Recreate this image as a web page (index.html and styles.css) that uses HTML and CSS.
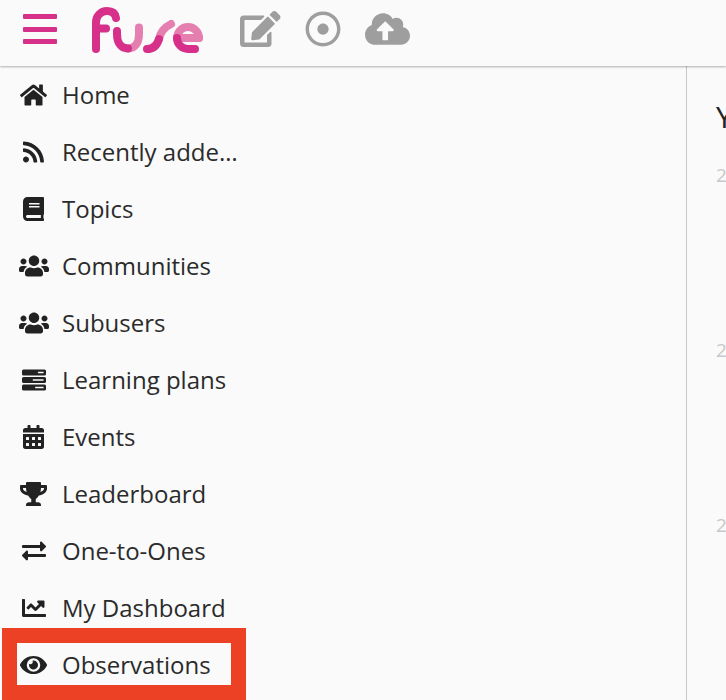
FILE: index.html
```html
<!DOCTYPE html>
<html lang="en">
<head>
    <meta charset="UTF-8">
    <meta name="viewport" content="width=device-width, initial-scale=1.0">
    <title>Fuse</title>
    <link rel="stylesheet" href="styles.css">
</head>
<body>
    <header class="topbar">
        <button class="menu-btn" aria-label="Menu"><span></span><span></span><span></span></button>

        <!-- Logo -->
        <svg class="logo" viewBox="0 0 116 52" role="img" aria-label="Fuse" fill="none" stroke-linecap="round">
            <g stroke="#e57fb0" stroke-width="8">
                <path d="M38 45.5C44 45.5 49 41 49 31V24.5"/>
                <path d="M69 36Q71 26 81 21"/>
                <path d="M87 35H109"/>
                <path d="M109 35A11 11 0 0 0 87 35"/>
            </g>
            <g stroke="#d6308a" stroke-width="8">
                <path d="M6 46V19A11 11 0 0 1 17 8Q25 8 26 15"/>
                <path d="M6 25.5H16"/>
                <path d="M27 28V31C27 41 32 45.5 38 45.5"/>
                <path d="M57 46Q66 46 69 36"/>
                <path d="M87 35A11 11 0 0 0 98 46H105"/>
            </g>
        </svg>

        <div class="tools">
            <svg class="tool" viewBox="0 0 576 512"><path d="M402.6 83.2l90.2 90.2c3.8 3.8 3.8 10 0 13.8L274.4 405.6l-92.8 10.3c-12.4 1.4-22.9-9.1-21.5-21.5l10.3-92.8L388.8 83.2c3.8-3.8 10-3.8 13.8 0zm162-22.9l-48.8-48.8c-15.2-15.2-39.9-15.2-55.2 0l-35.4 35.4c-3.8 3.8-3.8 10 0 13.8l90.2 90.2c3.8 3.8 10 3.8 13.8 0l35.4-35.4c15.2-15.3 15.2-40 0-55.2zM384 346.2V448H64V128h229.8c3.2 0 6.2-1.3 8.5-3.5l40-40c7.6-7.6 2.2-20.5-8.5-20.5H48C21.5 64 0 85.5 0 112v352c0 26.5 21.5 48 48 48h352c26.5 0 48-21.5 48-48V306.2c0-10.7-12.9-16-20.5-8.5l-40 40c-2.2 2.3-3.5 5.3-3.5 8.5z"/></svg>
            <svg class="tool" viewBox="0 0 512 512"><path d="M256 56c110.532 0 200 89.451 200 200 0 110.532-89.451 200-200 200-110.532 0-200-89.451-200-200 0-110.532 89.451-200 200-200m0-48C119.033 8 8 119.033 8 256s111.033 248 248 248 248-111.033 248-248S392.967 8 256 8zm0 168c-44.183 0-80 35.817-80 80s35.817 80 80 80 80-35.817 80-80-35.817-80-80-80z"/></svg>
            <svg class="tool" viewBox="0 0 640 512"><path d="M537.6 226.6c4.1-10.7 6.4-22.4 6.4-34.6 0-53-43-96-96-96-19.7 0-38.1 6-53.3 16.2C367 64.2 315.3 32 256 32c-88.4 0-160 71.6-160 160 0 2.7.1 5.4.2 8.1C40.2 219.8 0 273.2 0 336c0 79.5 64.5 144 144 144h368c70.7 0 128-57.3 128-128 0-61.9-44-113.6-102.4-125.4zM393.4 288H328v112c0 8.8-7.2 16-16 16h-48c-8.8 0-16-7.2-16-16V288h-65.4c-14.3 0-21.4-17.2-11.3-27.3l105.4-105.4c6.2-6.2 16.4-6.2 22.6 0l105.4 105.4c10.1 10.1 2.9 27.3-11.3 27.3z"/></svg>
        </div>
    </header>

    <div class="layout">
        <nav class="sidebar">
            <a class="nav-item"><span class="nav-icon"><svg viewBox="0 0 576 512"><path d="M280.37 148.26L96 300.11V464a16 16 0 0 0 16 16l112.06-.29a16 16 0 0 0 15.92-16V368a16 16 0 0 1 16-16h64a16 16 0 0 1 16 16v95.64a16 16 0 0 0 16 16.05L464 480a16 16 0 0 0 16-16V300L295.67 148.26a12.19 12.19 0 0 0-15.3 0zM571.6 251.47L488 182.56V44.05a12 12 0 0 0-12-12h-56a12 12 0 0 0-12 12v72.61L318.47 43a48 48 0 0 0-61 0L4.34 251.47a12 12 0 0 0-1.6 16.9l25.5 31A12 12 0 0 0 45.15 301l235.22-193.74a12.19 12.19 0 0 1 15.3 0L530.9 301a12 12 0 0 0 16.9-1.6l25.5-31a12 12 0 0 0-1.7-16.93z"/></svg></span><span class="nav-label">Home</span></a>
            <a class="nav-item"><span class="nav-icon"><svg viewBox="0 0 448 512"><path d="M128.081 415.959c0 35.369-28.672 64.041-64.041 64.041S0 451.328 0 415.959s28.672-64.041 64.041-64.041 64.04 28.673 64.04 64.041zm175.66 47.25c-8.354-154.6-132.185-278.587-286.95-286.95C7.656 175.765 0 183.105 0 192.253v48.069c0 8.415 6.49 15.472 14.887 16.018 111.832 7.284 201.473 96.702 208.772 208.772.547 8.397 7.604 14.887 16.018 14.887h48.069c9.149.001 16.489-7.655 15.995-16.79zm144.249.288C439.596 229.677 251.465 40.445 16.503 32.01 7.473 31.686 0 38.981 0 48.016v48.068c0 8.625 6.835 15.645 15.453 15.999 191.179 7.839 344.627 161.316 352.465 352.465.353 8.618 7.373 15.453 15.999 15.453h48.068c9.034-.001 16.329-7.474 16.005-16.504z"/></svg></span><span class="nav-label">Recently added content</span></a>
            <a class="nav-item"><span class="nav-icon"><svg viewBox="0 0 448 512"><path d="M448 360V24c0-13.3-10.7-24-24-24H96C43 0 0 43 0 96v320c0 53 43 96 96 96h328c13.3 0 24-10.7 24-24v-16c0-7.5-3.5-14.3-8.9-18.7-4.2-15.4-4.2-59.3 0-74.7 5.4-4.3 8.9-11.1 8.9-18.6zM128 134c0-3.3 2.7-6 6-6h212c3.3 0 6 2.7 6 6v20c0 3.3-2.7 6-6 6H134c-3.3 0-6-2.7-6-6v-20zm0 64c0-3.3 2.7-6 6-6h212c3.3 0 6 2.7 6 6v20c0 3.3-2.7 6-6 6H134c-3.3 0-6-2.7-6-6v-20zm253.4 250H96c-17.7 0-32-14.3-32-32 0-17.6 14.4-32 32-32h285.4c-1.9 17.1-1.9 46.9 0 64z"/></svg></span><span class="nav-label">Topics</span></a>
            <a class="nav-item"><span class="nav-icon"><svg viewBox="0 0 640 512"><path d="M96 224c35.3 0 64-28.7 64-64s-28.7-64-64-64-64 28.7-64 64 28.7 64 64 64zm448 0c35.3 0 64-28.7 64-64s-28.7-64-64-64-64 28.7-64 64 28.7 64 64 64zm32 32h-64c-17.6 0-33.5 7.1-45.1 18.6 40.3 22.1 68.9 62 75.1 109.4h66c17.7 0 32-14.3 32-32v-32c0-35.3-28.7-64-64-64zm-256 0c61.9 0 112-50.1 112-112S381.9 32 320 32 208 82.1 208 144s50.1 112 112 112zm76.8 32h-8.3c-20.8 10-43.9 16-68.5 16s-47.6-6-68.5-16h-8.3C179.6 288 128 339.6 128 403.2V432c0 26.5 21.5 48 48 48h288c26.5 0 48-21.5 48-48v-28.8c0-63.6-51.6-115.2-115.2-115.2zm-223.7-13.4C161.5 263.1 145.6 256 128 256H64c-35.3 0-64 28.7-64 64v32c0 17.7 14.3 32 32 32h65.9c6.3-47.4 34.9-87.3 75.2-109.4z"/></svg></span><span class="nav-label">Communities</span></a>
            <a class="nav-item"><span class="nav-icon"><svg viewBox="0 0 640 512"><path d="M96 224c35.3 0 64-28.7 64-64s-28.7-64-64-64-64 28.7-64 64 28.7 64 64 64zm448 0c35.3 0 64-28.7 64-64s-28.7-64-64-64-64 28.7-64 64 28.7 64 64 64zm32 32h-64c-17.6 0-33.5 7.1-45.1 18.6 40.3 22.1 68.9 62 75.1 109.4h66c17.7 0 32-14.3 32-32v-32c0-35.3-28.7-64-64-64zm-256 0c61.9 0 112-50.1 112-112S381.9 32 320 32 208 82.1 208 144s50.1 112 112 112zm76.8 32h-8.3c-20.8 10-43.9 16-68.5 16s-47.6-6-68.5-16h-8.3C179.6 288 128 339.6 128 403.2V432c0 26.5 21.5 48 48 48h288c26.5 0 48-21.5 48-48v-28.8c0-63.6-51.6-115.2-115.2-115.2zm-223.7-13.4C161.5 263.1 145.6 256 128 256H64c-35.3 0-64 28.7-64 64v32c0 17.7 14.3 32 32 32h65.9c6.3-47.4 34.9-87.3 75.2-109.4z"/></svg></span><span class="nav-label">Subusers</span></a>
            <a class="nav-item"><span class="nav-icon"><svg viewBox="0 0 512 512"><path fill-rule="evenodd" d="M32 32H480A32 32 0 0 1 512 64V128A32 32 0 0 1 480 160H32A32 32 0 0 1 0 128V64A32 32 0 0 1 32 32ZM340 82V110H460V82ZM32 192H480A32 32 0 0 1 512 224V288A32 32 0 0 1 480 320H32A32 32 0 0 1 0 288V224A32 32 0 0 1 32 192ZM230 242V270H460V242ZM32 352H480A32 32 0 0 1 512 384V448A32 32 0 0 1 480 480H32A32 32 0 0 1 0 448V384A32 32 0 0 1 32 352ZM280 402V430H460V402Z"/></svg></span><span class="nav-label">Learning plans</span></a>
            <a class="nav-item"><span class="nav-icon"><svg viewBox="0 0 448 512"><path d="M0 464c0 26.5 21.5 48 48 48h352c26.5 0 48-21.5 48-48V192H0v272zm320-196c0-6.6 5.4-12 12-12h40c6.6 0 12 5.4 12 12v40c0 6.6-5.4 12-12 12h-40c-6.6 0-12-5.4-12-12v-40zm0 128c0-6.6 5.4-12 12-12h40c6.6 0 12 5.4 12 12v40c0 6.6-5.4 12-12 12h-40c-6.6 0-12-5.4-12-12v-40zM192 268c0-6.6 5.4-12 12-12h40c6.6 0 12 5.4 12 12v40c0 6.6-5.4 12-12 12h-40c-6.6 0-12-5.4-12-12v-40zm0 128c0-6.6 5.4-12 12-12h40c6.6 0 12 5.4 12 12v40c0 6.6-5.4 12-12 12h-40c-6.6 0-12-5.4-12-12v-40zM64 268c0-6.6 5.4-12 12-12h40c6.6 0 12 5.4 12 12v40c0 6.6-5.4 12-12 12H76c-6.6 0-12-5.4-12-12v-40zm0 128c0-6.6 5.4-12 12-12h40c6.6 0 12 5.4 12 12v40c0 6.6-5.4 12-12 12H76c-6.6 0-12-5.4-12-12v-40zM400 64h-48V16c0-8.8-7.2-16-16-16h-32c-8.8 0-16 7.2-16 16v48H160V16c0-8.8-7.2-16-16-16h-32c-8.8 0-16 7.2-16 16v48H48C21.5 64 0 85.5 0 112v48h448v-48c0-26.5-21.5-48-48-48z"/></svg></span><span class="nav-label">Events</span></a>
            <a class="nav-item"><span class="nav-icon"><svg viewBox="0 0 576 512"><path d="M552 64H448V24c0-13.3-10.7-24-24-24H152c-13.3 0-24 10.7-24 24v40H24C10.7 64 0 74.7 0 88v56c0 35.7 22.5 72.4 61.9 100.7 31.5 22.7 69.8 37.1 110 41.7C203.3 338.5 240 360 240 360v72h-48c-35.3 0-64 20.7-64 56v12c0 6.6 5.4 12 12 12h296c6.6 0 12-5.4 12-12v-12c0-35.3-28.7-56-64-56h-48v-72s36.7-21.5 68.1-73.6c40.3-4.6 78.6-19 110-41.7 39.3-28.3 61.9-65 61.9-100.7V88c0-13.3-10.7-24-24-24zM99.3 192.8C74.9 175.2 64 155.6 64 144v-16h64.2c1 32.6 5.8 61.2 12.8 86.2-15.1-5.2-29.2-12.4-41.7-21.4zM512 144c0 16.1-17.7 36.1-35.3 48.8-12.5 9-26.7 16.2-41.8 21.4 7-25 11.8-53.6 12.8-86.2H512v16z"/></svg></span><span class="nav-label">Leaderboard</span></a>
            <a class="nav-item"><span class="nav-icon"><svg viewBox="0 0 512 512"><path d="M0 168v-16c0-13.255 10.745-24 24-24h360V80c0-21.367 25.899-32.042 40.971-16.971l80 80c9.372 9.373 9.372 24.569 0 33.941l-80 80C409.956 271.982 384 261.456 384 240v-48H24c-13.255 0-24-10.745-24-24zm488 152H128v-48c0-21.314-25.862-32.08-40.971-16.971l-80 80c-9.372 9.373-9.372 24.569 0 33.941l80 80C102.057 463.997 128 453.437 128 432v-48h360c13.255 0 24-10.745 24-24v-16c0-13.255-10.745-24-24-24z"/></svg></span><span class="nav-label">One-to-Ones</span></a>
            <a class="nav-item"><span class="nav-icon"><svg viewBox="0 0 512 512"><path d="M496 384H64V80c0-8.84-7.16-16-16-16H16C7.16 64 0 71.16 0 80v336c0 17.67 14.33 32 32 32h464c8.84 0 16-7.16 16-16v-32c0-8.84-7.16-16-16-16zM464 96H345.94c-21.38 0-32.09 25.85-16.97 40.97l32.4 32.4L288 242.75l-73.37-73.37c-12.5-12.5-32.76-12.5-45.25 0l-68.69 68.69c-6.25 6.25-6.25 16.38 0 22.63l22.62 22.62c6.25 6.25 16.38 6.25 22.63 0L192 237.25l73.37 73.37c12.5 12.5 32.76 12.5 45.25 0l96-96 32.4 32.4c15.12 15.12 40.97 4.41 40.97-16.97V112c.01-8.84-7.15-16-15.99-16z"/></svg></span><span class="nav-label">My Dashboard</span></a>
            <a class="nav-item"><span class="nav-icon"><svg viewBox="0 0 576 512"><path d="M572.52 241.4C518.29 135.59 410.93 64 288 64S57.68 135.64 3.48 241.41a32.35 32.35 0 0 0 0 29.19C57.71 376.41 165.07 448 288 448s230.32-71.64 284.52-177.41a32.35 32.35 0 0 0 0-29.19zM288 400a144 144 0 1 1 144-144 143.93 143.93 0 0 1-144 144zm0-240a95.31 95.31 0 0 0-25.31 3.79 47.85 47.85 0 0 1-66.9 66.9A95.78 95.78 0 1 0 288 160z"/></svg></span><span class="nav-label">Observations</span></a>
        </nav>

        <main class="content">
            <h2 class="content-title">Y</h2>
            <div class="feed-item">2</div>
            <div class="feed-item">2</div>
            <div class="feed-item">2</div>
        </main>
    </div>

    <!-- Red annotation frame around the Observations row -->
    <div class="callout"></div>
</body>
</html>
```

FILE: styles.css
```css
* {
    margin: 0;
    padding: 0;
    box-sizing: border-box;
}

body {
    position: relative;
    height: 100vh;
    overflow: hidden;
    font-family: 'Open Sans', sans-serif;
    background-color: #fafafa;
    color: #2b2b2b;
}

/* Barra superior */
.topbar {
    display: flex;
    align-items: center;
    height: 66px;
    padding-left: 23px;
    background-color: #fafafa;
    box-shadow: 0 1px 2px rgba(0, 0, 0, 0.3);
    position: relative;
}

.menu-btn {
    display: flex;
    flex-direction: column;
    justify-content: space-between;
    width: 34px;
    height: 30px;
    margin-top: -8px;
    border: none;
    background: none;
}

.menu-btn span {
    display: block;
    height: 5px;
    border-radius: 1px;
    background-color: #d6308a;
}

.logo {
    width: 116px;
    height: 52px;
    margin-left: 33px;
    margin-top: -9px;
}

.tools {
    display: flex;
    align-items: center;
    gap: 24px;
    margin-left: 34px;
    margin-top: -9px;
}

.tool {
    height: 36px;
    fill: #9e9e9e;
}

/* Menu lateral */
.layout {
    display: flex;
    height: 634px;
}

.sidebar {
    width: 687px;
    flex-shrink: 0;
    border-right: 1px solid #c8c8c8;
}

.nav-item {
    display: flex;
    align-items: center;
    height: 57px;
    padding-left: 18px;
}

.nav-icon {
    display: flex;
    justify-content: center;
    width: 31px;
    margin-right: 13px;
}

.nav-icon svg {
    height: 24px;
    fill: #222;
}

.nav-label {
    max-width: 177px;
    font-size: 24px;
    white-space: nowrap;
    overflow: hidden;
    text-overflow: ellipsis;
}

/* Conteudo cortado pela janela */
.content {
    flex: 1;
    padding: 30px 0 0 29px;
    overflow: hidden;
}

.content-title {
    height: 41px;
    font-size: 30px;
    font-weight: 400;
    line-height: 41px;
    color: #222;
}

.feed-item {
    height: 175px;
    padding-top: 25px;
    font-size: 19px;
    line-height: 26px;
    color: #c8c8c8;
}

.callout {
    position: absolute;
    left: 2px;
    top: 628px;
    width: 244px;
    height: 72px;
    border: 15px solid #ec4125;
}
```
